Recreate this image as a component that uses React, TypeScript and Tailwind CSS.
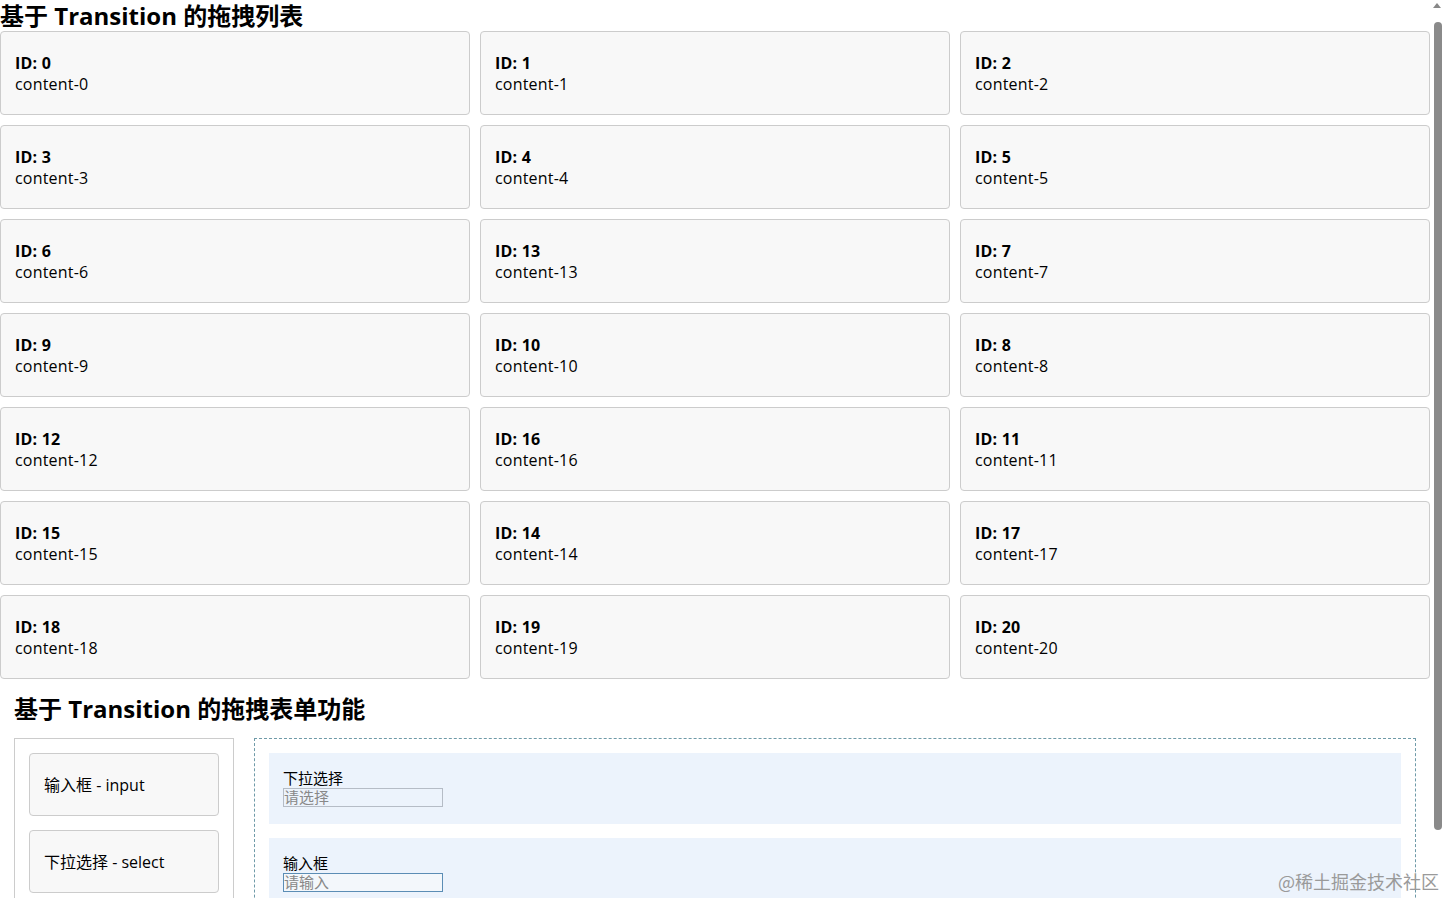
import React from "react";

const ids = [0,1,2,3,4,5,6,13,7,9,10,8,12,16,11,15,14,17,18,19,20];

export default function App() {
  return (
    <div className="relative w-[1445px] h-[898px] overflow-hidden bg-white text-black" style={{ fontFamily: '"Open Sans","Noto Sans CJK SC",sans-serif' }}>
      <div className="w-[1430px]">
        <h1 className="text-[24px] font-bold leading-[31px] h-[31px]">基于 Transition 的拖拽列表</h1>
        <div className="grid grid-cols-3 gap-[10px]">
          {ids.map((id) => (
            <div key={id} className="h-[84px] border border-[#cccccc] rounded-[4px] bg-[#f8f8f8] px-[14px] pt-[21px] text-[16px] leading-[21px] tracking-[0.2px]">
              <div className="font-bold">ID: {id}</div>
              <div>content-{id}</div>
            </div>
          ))}
        </div>
        <div className="px-[14px]">
          <h2 className="text-[24px] font-bold leading-[31px] mt-[14px] mb-[14px]">基于 Transition 的拖拽表单功能</h2>
          <div className="flex gap-[20px] items-start">
            <div className="w-[220px] h-[200px] border border-[#cccccc] p-[14px] flex flex-col gap-[14px]">
              <div className="h-[63px] border border-[#cccccc] rounded-[4px] bg-[#f8f8f8] flex items-center px-[14px] text-[16px]">输入框 - input</div>
              <div className="h-[63px] border border-[#cccccc] rounded-[4px] bg-[#f8f8f8] flex items-center px-[14px] text-[16px]">下拉选择 - select</div>
            </div>
            <div className="flex-1 h-[200px] border border-dashed border-[#6f9aa8] p-[14px] flex flex-col gap-[14px]">
              <div className="h-[71px] bg-[#ecf3fc] px-[14px] pt-[15px] text-[15px] leading-[20px]">
                <div>下拉选择</div>
                <div className="w-[160px] h-[19px] border border-[#b5bcc6] text-[#888] text-[15px] leading-[17px]">请选择</div>
              </div>
              <div className="h-[71px] bg-[#ecf3fc] px-[14px] pt-[15px] text-[15px] leading-[20px]">
                <div>输入框</div>
                <div className="w-[160px] h-[19px] border border-[#5b8db5] bg-[#f3f7fb] text-[#888] text-[15px] leading-[17px]">请输入</div>
              </div>
            </div>
          </div>
        </div>
      </div>
      <div className="absolute right-[3px] top-[22px] w-[8px] h-[808px] rounded-full bg-[#8a8a8a]" />
      <div className="absolute right-[4px] top-[3px] w-0 h-0 border-l-[4px] border-r-[4px] border-b-[5px] border-l-transparent border-r-transparent border-b-[#888]" />
      <div className="absolute right-[6px] top-[868px] text-[18px] text-[#9a9a9a]" style={{ fontFamily: '"Noto Sans CJK SC",serif' }}>@稀土掘金技术社区</div>
    </div>
  );
}
